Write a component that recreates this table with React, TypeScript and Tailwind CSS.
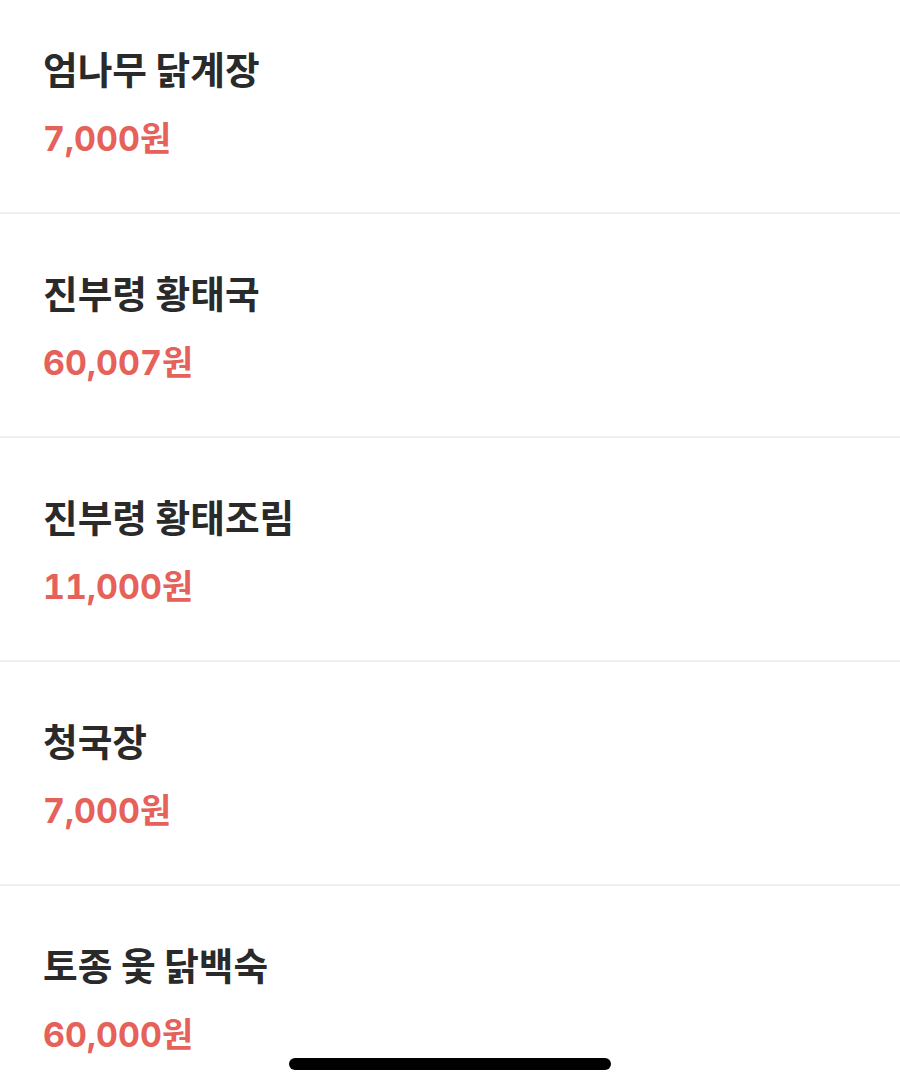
const menus = [
  { name: '엄나무 닭계장', price: '7,000원' },
  { name: '진부령 황태국', price: '60,007원' },
  { name: '진부령 황태조림', price: '11,000원' },
  { name: '청국장', price: '7,000원' },
  { name: '토종 옻 닭백숙', price: '60,000원' },
];

export default function App() {
  return (
    <div
      className="relative h-[1089px] w-[900px] overflow-hidden bg-white"
      style={{ fontFamily: '"Noto Sans CJK KR", "Noto Sans", sans-serif' }}
    >
      <ul className="-mt-[10px]">
        {menus.map((m) => (
          <li key={m.name} className="flex h-[224px] flex-col border-b-2 border-[#efeff1] px-[43px] pt-[54px]">
            <p className="text-[37.7px] leading-[48px] font-semibold text-[#2a2a2a]">{m.name}</p>
            <p className="mt-[23px] font-['Inter','Noto_Sans_CJK_KR',sans-serif] text-[34px] leading-[48px] font-bold tabular-nums text-[#e5615a]">
              {m.price}
            </p>
          </li>
        ))}
      </ul>
      <div className="absolute bottom-[19px] left-[289px] h-[12px] w-[322px] rounded-full bg-black" />
    </div>
  );
}
